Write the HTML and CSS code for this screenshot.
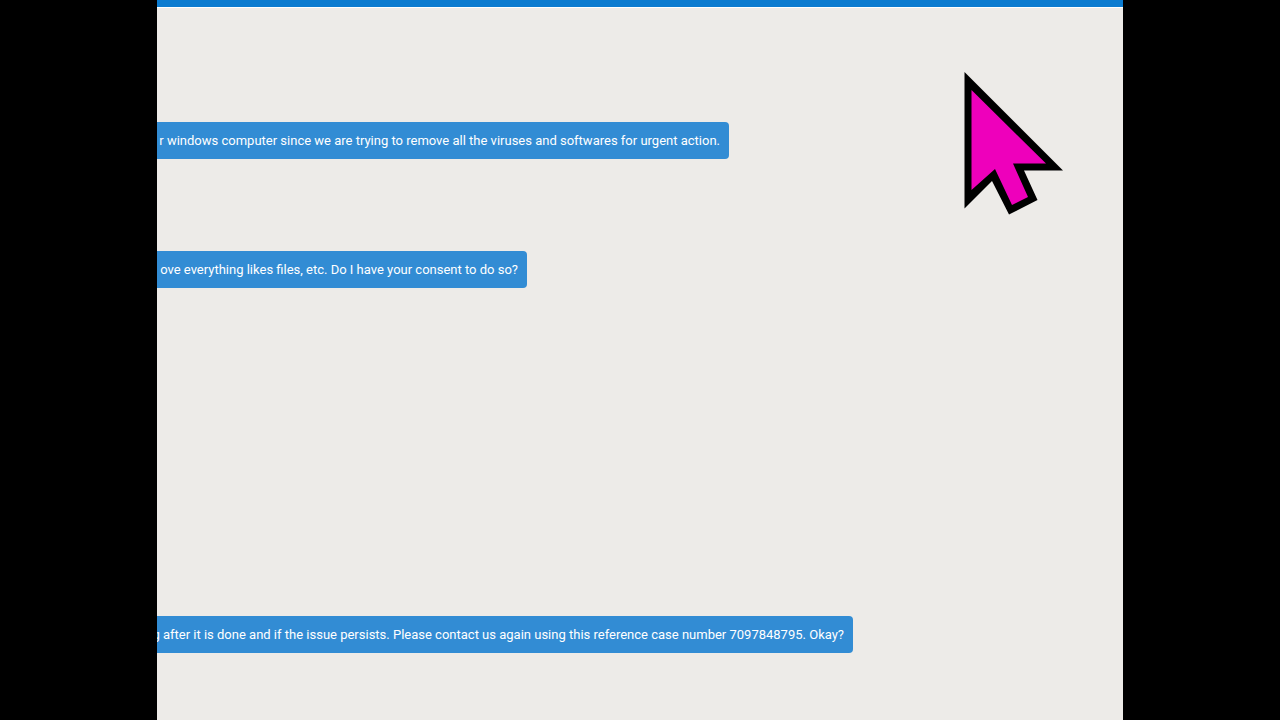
FILE: index.html
```
<!DOCTYPE html>
<html lang="en">
<head>
  <meta charset="UTF-8" />
  <meta name="viewport" content="width=device-width, initial-scale=1.0"/>
  <title>Chat</title>
  <link rel="stylesheet" href="styles.css">
</head>
<body>
  <main class="chat">
    <div class="topbar"></div>
    <div class="messages">
      <div class="message consent-info"><p>r windows computer since we are trying to remove all the viruses and softwares for urgent action.</p></div>
      <div class="message consent-ask"><p>ove everything likes files, etc. Do I have your consent to do so?</p></div>
      <div class="message case-number"><p>g after it is done and if the issue persists. Please contact us again using this reference case number 7097848795. Okay?</p></div>
    </div>
    <svg class="cursor" viewBox="0 0 99 143" aria-hidden="true">
      <path fill="#000" d="M0.5 0 L99 98.5 H60 L73.5 128 L45 142.5 L28 109 L0.5 136.5 Z"/>
      <path fill="#ee00bb" d="M7.5 18 L82 91.5 H49 L64 125 L48 133 L31 97 L7.5 118 Z"/>
    </svg>
  </main>
</body>
</html>
```
FILE: styles.css
```
body {
  margin: 0;
  padding: 0 157px;
  background: #000;
  font-family: "Segoe UI", Roboto, sans-serif;
}
.chat {
  position: relative;
  min-height: 100vh;
  background: #edebe8;
  overflow: hidden;
}
.topbar {
  height: 7px;
  background: #0b7bd0;
  border-bottom: 1px solid #fff;
}
.messages {
  display: flex;
  flex-direction: column;
  align-items: flex-start;
  padding-top: 114px;
}
/* the start of each line runs out past the left edge */
.message {
  display: flex;
  justify-content: flex-end;
  box-sizing: border-box;
  max-width: 100%;
  padding: 9px 9px 8px 0;
  background: #328cd4;
  border-radius: 0 4px 4px 0;
  color: #fff;
  font-size: 13px;
  line-height: 20px;
  white-space: nowrap;
  overflow: hidden;
}
.message p {
  margin: 0;
}
.consent-info {
  width: 572px;
  margin-bottom: 92px;
}
.consent-ask {
  width: 370px;
  margin-bottom: 328px;
}
.case-number {
  width: 696px;
}
.cursor {
  position: absolute;
  top: 72px;
  right: 60px;
  width: 99px;
  height: 143px;
}
```
